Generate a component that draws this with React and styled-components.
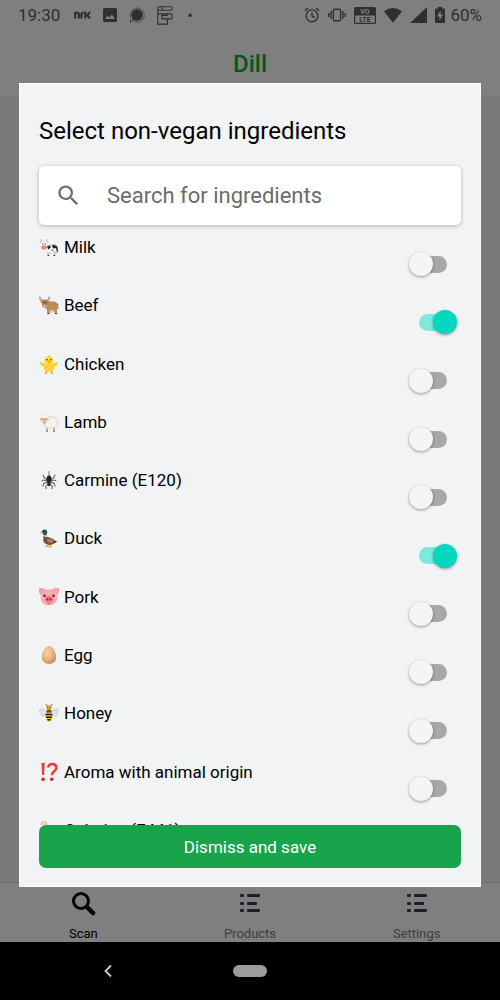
import React, { useState } from "react";
import styled, { createGlobalStyle } from "styled-components";

const GlobalStyle = createGlobalStyle`
  *, *::before, *::after { box-sizing: border-box; }
  body { margin: 0; font-family: Roboto, "Liberation Sans", sans-serif; color: #000; }
`;

const Phone = styled.div`
  display: flex;
  flex-direction: column;
  height: 100vh;
  overflow: hidden;
`;

const Screen = styled.div`
  position: relative;
  flex: 1;
  min-height: 0;
  display: flex;
  flex-direction: column;
  background: #f2f2f2;
`;

const TopArea = styled.div`
  background: #fff;
  border-bottom: 1px solid #e8e8e8;
`;

const StatusBar = styled.div`
  display: flex;
  justify-content: space-between;
  height: 30px;
  padding: 0 18px;
  color: #5e5e5e;
  font-size: 17px;
  line-height: 30px;
`;

const StatusGroup = styled.div`
  display: flex;
  align-items: center;
  gap: ${(p) => p.$gap}px;
  svg { display: block; flex: none; }
`;

const Title = styled.h1`
  margin: 0;
  height: 67px;
  line-height: 68px;
  font-size: 24px;
  font-weight: 500;
  text-align: center;
  color: #06ae40;
`;

const Body = styled.div`
  flex: 1;
`;

const TabBar = styled.nav`
  display: flex;
  height: 60px;
  background: #fff;
  border-top: 1px solid #d8d8d8;
`;

const Tab = styled.a`
  flex: 1;
  display: flex;
  flex-direction: column;
  align-items: center;
  justify-content: space-between;
  padding: 8px 0 0;
  font-size: 13px;
  line-height: 16px;
  text-decoration: none;
  color: ${(p) => (p.$active ? "#000" : "#7c7c7c")};
  svg { display: block; }
`;

const Overlay = styled.div`
  position: absolute;
  inset: 0;
  display: flex;
  padding: 83px 19px 55px;
  background: rgba(0, 0, 0, 0.5);
`;

const Dialog = styled.section`
  flex: 1;
  min-height: 0;
  display: flex;
  flex-direction: column;
  padding: 30px 19px 18px;
  background: #f2f3f5;
  border: 1px solid #fff;
`;

const Heading = styled.h2`
  margin: 0 0 18px;
  font-size: 24px;
  line-height: 34px;
  font-weight: 400;
`;

const SearchBox = styled.label`
  display: flex;
  align-items: center;
  flex: none;
  height: 59px;
  padding: 0 16px;
  gap: 25px;
  background: #fff;
  border-radius: 5px;
  box-shadow: 0 1px 4px rgba(0, 0, 0, 0.28);
  svg { display: block; flex: none; }
`;

const SearchInput = styled.input`
  flex: 1;
  min-width: 0;
  border: 0;
  padding: 0;
  outline: 0;
  background: none;
  font: 400 22px/30px Roboto, "Liberation Sans", sans-serif;
  color: #222;
  &::placeholder { color: #6b6b6b; opacity: 1; }
`;

/* Ten rows fill the visible list; the next one peeks out below them. */
const List = styled.ul`
  flex: 1;
  min-height: 0;
  display: grid;
  grid-auto-rows: 10%;
  margin: 10px 0 0;
  padding: 0 0 7px;
  overflow: hidden;
  list-style: none;
`;

const Row = styled.li`
  display: flex;
  justify-content: space-between;
  align-items: center;
  padding-right: 4px;
`;

const RowLabel = styled.label`
  align-self: flex-start;
  display: flex;
  align-items: center;
  gap: 5px;
  font-size: 17px;
  line-height: 24px;
  svg { display: block; flex: none; }
`;

const Switch = styled.input.attrs({ type: "checkbox", role: "switch" })`
  appearance: none;
  display: grid;
  align-items: center;
  width: 48px;
  height: 24px;
  margin: 0;
  cursor: pointer;
  &::before, &::after { content: ""; grid-area: 1 / 1; }
  &::before {
    justify-self: center;
    width: 28px;
    height: 17px;
    border-radius: 9px;
    background: #a8a8a9;
  }
  &::after {
    justify-self: start;
    width: 24px;
    height: 24px;
    border-radius: 50%;
    background: #f5f5f5;
    box-shadow: 0 1px 3px rgba(0, 0, 0, 0.4);
  }
  &:checked::before { background: #7de8dc; }
  &:checked::after { justify-self: end; background: #03d7bf; }
`;

const SaveButton = styled.button`
  flex: none;
  height: 43px;
  border: 0;
  border-radius: 7px;
  background: #19a34b;
  color: #fff;
  font: 400 17px/24px Roboto, "Liberation Sans", sans-serif;
  cursor: pointer;
`;

const SystemNav = styled.div`
  display: grid;
  grid-template-columns: 1fr 34px 1fr;
  align-items: center;
  height: 58px;
  background: #000;
`;

const BackButton = styled.button`
  justify-self: center;
  display: grid;
  place-items: center;
  width: 24px;
  height: 24px;
  margin-right: 18px;
  padding: 0;
  border: 0;
  background: none;
`;

const HomeButton = styled.button`
  height: 12px;
  padding: 0;
  border: 0;
  border-radius: 6px;
  background: #9c9c9c;
`;

const art = {
  milk: (
    <>
      <path d="M8 8.5 16 7.5q2 .2 2 3l.6 5" fill="#eee" stroke="#999" strokeWidth=".6" />
      <path d="M7 8.5h9l1.5 1-.5 5H8z" fill="#f4f4f4" />
      <path d="M9 15v3.3M11 15v2.6M15 14v4.3M17 14v3.5" stroke="#ccc" strokeWidth="1.6" />
      <path d="M8.5 18.4h1.8M14.4 18.4h1.8" stroke="#333" strokeWidth="1" />
      <path d="M8 9.3l3-.8.8 2-2.6 2zM12.5 8.4l3.6-.4.8 3-2.3.6zM16.4 8.4l1.8 1.2.8 5-.9.5-1-3.6zM12 12.8l2-.4-.3 1.6z" fill="#1c1c1c" />
      <path d="M2.8 4.8 5 3.5l2.4 1.3.3 5-1.3 2.4H3.8L2.3 9.8z" fill="#e9e9e9" />
      <path d="M2.2 5 .9 4.2l.5 2zM8 5l1.4-.8-.5 2z" fill="#c88" />
      <path d="M2 2.3l.7 1.8M8 2.3l-.7 1.8" stroke="#a99" strokeWidth=".9" />
      <ellipse cx="5" cy="10.4" rx="2.8" ry="2" fill="#ed7f85" />
      <path d="M3.5 7.2h.8M5.9 7.2h.8" stroke="#222" strokeWidth="1" />
    </>
  ),
  beef: (
    <>
      <path d="M5 7.2q6.500-2 12-.2 1.900 1.500 1.400 5.200l-.5 3.100.2 3.200h-2.100l-.8-3.700-4.600.1.100 3.600H8.400l-.6-4L5 12z" fill="#bd8d58" />
      <path d="M12 14.600v3M14.600 14.500l.6 3M18.300 8.500q1 2 .6 5.500" fill="none" stroke="#94673b" strokeWidth=".9" />
      <path d="M8.300 18.600h2.300M16 18.600h2.200" stroke="#4d3826" strokeWidth="1" />
      <path d="M3 4.800h5.200l-.4 5.400-1.200 2.500H4.200L3 10.200z" fill="#ac7a46" />
      <path d="M3.400 5.200Q.6 5 1 1.600M7.800 5.200q2.800-.2 2.400-3.600" fill="none" stroke="#9aa0a5" strokeWidth="1.600" />
      <path d="M2.900 6.300.9 6.700l2 1.100M8.100 6.300l2 .4-2 1.100" fill="#7d5534" />
      <ellipse cx="5.500" cy="11.200" rx="2.100" ry="1.600" fill="#e9c3ad" />
      <path d="M4 7.700h.8M6.300 7.700h.8M4.600 11.200h.5M6 11.200h.5" stroke="#332015" strokeWidth=".9" />
    </>
  ),
  chicken: (
    <>
      <path d="M7.800 16.500 7 19M12.200 16.500l.8 2.500M5.800 19h2.400M11.800 19h2.400" stroke="#ef8a17" strokeWidth="1.200" />
      <path d="M5 12.500Q1 11.800 1 7.700L5.800 10M15 12.500q4-.7 4-4.800L14.200 10" fill="#fccb1e" />
      <ellipse cx="10" cy="13" rx="5.600" ry="4.600" fill="#ffd22e" />
      <circle cx="10" cy="6.500" r="4.500" fill="#ffda36" />
      <path d="M9 2.300l1-1.600 1 1.600z" fill="#f5b51a" />
      <circle cx="8" cy="5.800" r=".8" fill="#49351e" />
      <circle cx="12" cy="5.800" r=".8" fill="#49351e" />
      <path d="M8.800 7.200h2.400L10 9.200z" fill="#ed791c" />
    </>
  ),
  lamb: (
    <>
      <path d="M8 15v4M15 15v4" stroke="#c1a08b" strokeWidth="1.5" />
      <path d="M7 19h1.9M14 19h1.9" stroke="#504540" strokeWidth="1" />
      <path d="M6 5.2Q10 3.5 13.5 5q5 .2 5.4 4.3.8 5.5-4.4 6.4-5.5 1.2-8.200-.5Q4 13 4.8 9z" fill="#f3f1ed" stroke="#cfccc6" strokeWidth=".7" />
      <path d="M2.5 5h5.8l-.6 5-1.8 2.2H4.3L2.7 10z" fill="#efc4a2" />
      <path d="M2.7 6 .6 6.8l.6 1.6 2-.5M8 6l2 .8-.6 1.6-2-.5" fill="#dcad8a" />
      <path d="M2 5.3q0-2.4 3.3-3.2 4-.2 4.2 2.6-.8 1.700-2.200 1.100-1.200.8-2 .1-1.700.8-3.300-.6z" fill="#fbfaf6" stroke="#cfcac4" strokeWidth=".6" />
      <path d="M3.8 7.6h.8M6.2 7.6h.8M5 10.6h.9" stroke="#51392e" strokeWidth=".9" />
    </>
  ),
  carmine: (
    <>
      <path d="M10 1v6" stroke="#777" strokeWidth="1" />
      <path d="M8.5 9.8 5.3 8 4 4.700M11.5 9.8 14.700 8 16 4.700M8.2 11.2 4.8 10 2.6 11M11.8 11.2l3.4-1.2 2.2 1M8.2 12.5 5 13l-1.2 3.5M11.8 12.5l3.2.5 1.2 3.5M8.8 14.3 6.7 16l.6 3M11.2 14.3l2.1 1.700-.6 3" fill="none" stroke="#383838" strokeWidth=".9" />
      <ellipse cx="10" cy="9.2" rx="2.5" ry="3.7" fill="#202020" />
      <ellipse cx="10" cy="14" rx="1.9" ry="2.2" fill="#2b2b2b" />
    </>
  ),
  duck: (
    <>
      <path d="M10 15.5 8.5 18M12.5 15.5 11 18.5M6.3 18.2h3M9.5 18.8h3" stroke="#f49c1c" strokeWidth="1.3" />
      <path d="M4.2 7.5q1.3 1.6 4 1.2 5.5 1 9 4.6l-2 2.3q-4.500 2.500-8.700.2Q3.200 13.500 4.500 10z" fill="#76513b" />
      <path d="M8 10.5q5 .1 8.6 3.2-5.700 2.200-8.200-.2z" fill="#aa8060" />
      <path d="M14 13l4.5.3-3 2z" fill="#3e3430" />
      <path d="M2.5 4Q3 1.1 6 1.5q3 .8 2 4L7 8.3l-2.900-.7L4 5z" fill="#255c51" />
      <path d="M4 7.4l3.3.8" stroke="#eee" strokeWidth=".9" />
      <path d="M3 3.7.5 5.3l3 .5z" fill="#e6ac2a" />
      <circle cx="4.7" cy="3.7" r=".5" fill="#111" />
    </>
  ),
  pork: (
    <>
      <path d="M.6 1.800q3-.8 6 .7L2.400 7.500Q0 7.200.6 1.800zM19.400 1.800q-3-.8-6 .7l4.200 5q2.400-.3 1.800-5.700z" fill="#f9a1a9" stroke="#de8089" strokeWidth=".6" />
      <path d="M5 2.500h10q3.300 1.100 3.400 8-.3 7.500-8.400 7.700-8.100-.2-8.400-7.700.1-6.900 3.400-8z" fill="#ffa8af" />
      <ellipse cx="10" cy="12.200" rx="4.100" ry="3.100" fill="#ef7681" />
      <circle cx="5.500" cy="8.800" r="1.200" fill="#333" />
      <circle cx="14.500" cy="8.800" r="1.200" fill="#333" />
      <ellipse cx="8.500" cy="12.200" rx=".8" ry="1.300" fill="#812f39" />
      <ellipse cx="11.500" cy="12.200" rx=".8" ry="1.300" fill="#812f39" />
      <path d="M8.200 16.200q1.800 1 3.600 0" fill="none" stroke="#b84a58" strokeWidth=".8" />
    </>
  ),
  egg: (
    <>
      <defs>
        <radialGradient id="eggShade" cx=".38" cy=".36" r=".7">
          <stop offset="0" stopColor="#f8d5a8" />
          <stop offset=".6" stopColor="#e4b075" />
          <stop offset="1" stopColor="#c18b55" />
        </radialGradient>
      </defs>
      <path d="M10 1C6.5 1 2.9 7.5 2.9 12.2c0 4 3 6.700 7.100 6.700s7.100-2.700 7.100-6.700C17.100 7.500 13.500 1 10 1z" fill="url(#eggShade)" />
    </>
  ),
  honey: (
    <>
      <path d="M8 8.500Q3.500 4.600.9 6.200q-1.300 2.800 1.400 4.500-.8 2.300 1.500 3Q7 13 8.500 10M12 8.500q4.500-3.900 7.100-2.300 1.300 2.800-1.400 4.500.8 2.300-1.500 3Q13 13 11.500 10" fill="#dfe2e4" stroke="#b9bfc4" strokeWidth=".6" />
      <path d="M8.6 3.2 7 1.2M11.4 3.2 13 1.2" stroke="#4a3c24" strokeWidth=".9" />
      <circle cx="10" cy="4.7" r="2.7" fill="#e6b32f" />
      <ellipse cx="10" cy="8.6" rx="2.6" ry="2" fill="#6d5427" />
      <path d="M6.400 12q.3-2.600 3.600-2.600t3.600 2.600q-.2 4.700-3.600 7.300Q6.600 16.700 6.400 12z" fill="#fbc72b" />
      <path d="M6.5 11.5h7M7 14.2h6M8.3 16.8h3.4" stroke="#251f18" strokeWidth="1.4" />
      <circle cx="8.7" cy="4.5" r=".6" fill="#222" />
      <circle cx="11.3" cy="4.5" r=".6" fill="#222" />
    </>
  ),
  aroma: (
    <>
      <path d="M2.400 1h3.400l-.7 12H3.100z" fill="#f03a3e" />
      <circle cx="4.1" cy="17.2" r="1.8" fill="#dc2329" />
      <path d="M9.200 5.500Q9.500 2 13 2q4.400.1 4.400 3.800 0 2-2.300 3.600-2.200 1.300-2.200 3.800" fill="none" stroke="#f03a3e" strokeWidth="2.6" />
      <circle cx="12.8" cy="17.2" r="1.8" fill="#dc2329" />
    </>
  ),
  gelatine: (
    <path d="M2.500 6Q1 1.800 4.500 2q2-2 3.200 1Q8.600 5 7 6l8 7q3-.4 3 2.200-.5 2.600-3 2.200-2.200.5-2.200-2L5 7.600z" fill="#ecd9b8" stroke="#cdb07d" strokeWidth=".8" />
  ),
};

const ingredients = [
  ["milk", "Milk"],
  ["beef", "Beef"],
  ["chicken", "Chicken"],
  ["lamb", "Lamb"],
  ["carmine", "Carmine (E120)"],
  ["duck", "Duck"],
  ["pork", "Pork"],
  ["egg", "Egg"],
  ["honey", "Honey"],
  ["aroma", "Aroma with animal origin"],
  ["gelatine", "Gelatine (E441)"],
];

const Emoji = ({ name }) => (
  <svg width="20" height="20" viewBox="0 0 20 20" aria-hidden="true">{art[name]}</svg>
);

const ListIcon = () => (
  <svg width="22" height="26" viewBox="0 0 22 26" fill="#343f50" aria-hidden="true">
    {[[3, 13], [11, 10], [18, 13]].map(([y, w]) => (
      <g key={y}>
        <rect x="1" y={y} width="4" height="3" rx="1" />
        <rect x="8" y={y} width={w} height="3" rx="1" />
      </g>
    ))}
  </svg>
);

const StatusIconsLeft = () => (
  <StatusGroup $gap={12}>
    <svg width="17" height="8" viewBox="0 0 17 8" fill="none" stroke="currentColor" strokeWidth="2.1" aria-hidden="true">
      <path d="M1.200 7.500V1M1 1.800h2.400q1.500 0 1.500 1.600v4.100M7.400 7.500V3.200q0-1.500 2.300-1.500M11.300.5v7M12 4.300h1.300L16 .8M13.300 4.300 16 7.400" />
    </svg>
    <svg width="14" height="14" viewBox="0 0 14 14" aria-hidden="true">
      <path fill="currentColor" fillRule="evenodd" d="M1.500 0h11Q14 0 14 1.500v11q0 1.500-1.500 1.500h-11Q0 14 0 12.500v-11Q0 0 1.500 0zM2 11h10L8.900 6.500 6.300 9.700 4.600 7.600z" />
    </svg>
    <svg width="16" height="16" viewBox="0 0 16 16" aria-hidden="true">
      <path fill="currentColor" d="M8 2.200a5.800 5.800 0 1 1-2.500 11L2.800 14l.7-2.500A5.800 5.800 0 0 1 8 2.200z" />
      <path d="M1.800 11.200A7.100 7.100 0 1 1 5 14.500M1.600 12.500 1 15l2.600-.6" fill="none" stroke="currentColor" strokeDasharray="1.7 .9" />
    </svg>
    <svg width="16" height="19" viewBox="0 0 16 19" fill="none" stroke="currentColor" strokeWidth="1.1" aria-hidden="true">
      <path d="M5.200 4.300V.7h8.500q1.500 0 1.500 1.800t-1.500 1.800H3.200M5.200.7h-3Q.8.700.8 2.200v15.900h9.600v-5.200M4.800 7.900h8.900q1.500 0 1.500 1.700v1.600q0 1.700-1.500 1.700H5V9.400h5.200V7.900M.8 8V6q0-1.700 2.400-1.700M.8 9.400q0-1.500 2-1.500h2" />
    </svg>
  </StatusGroup>
);

const StatusIconsRight = () => (
  <StatusGroup $gap={8}>
    <svg width="16" height="16" viewBox="0 0 16 16" fill="none" stroke="currentColor" strokeWidth="1.4" aria-hidden="true">
      <circle cx="8" cy="8.8" r="5.9" />
      <path d="M8 5.300V9l2.600 1.700M1 3.700 4 1.100M15 3.700l-3-2.600" />
    </svg>
    <svg width="18" height="14" viewBox="0 0 18 14" fill="none" stroke="currentColor" strokeWidth="1.4" aria-hidden="true">
      <rect x="5.4" y="1.2" width="7.2" height="11.6" rx="1" />
      <path d="M3.100 3v8M.8 5v4M14.900 3v8M17.200 5v4" />
    </svg>
    <svg width="22" height="17" viewBox="0 0 22 17" aria-hidden="true">
      <rect x=".6" y=".6" width="20.8" height="15.8" rx="1" fill="none" stroke="currentColor" strokeWidth="1.2" />
      <path d="M1 1h20v7.500H1z" fill="currentColor" />
      <text x="11" y="7.4" textAnchor="middle" fontFamily="Roboto, sans-serif" fontSize="7" fontWeight="700" fill="#fff">VO</text>
      <text x="11" y="15.2" textAnchor="middle" fontFamily="Roboto, sans-serif" fontSize="7" fontWeight="700" fill="currentColor">LTE</text>
    </svg>
    <svg width="18" height="15" viewBox="0 0 18 15" fill="currentColor" aria-hidden="true">
      <path d="M0 3.300Q9-3.200 18 3.300L9 14.800z" />
    </svg>
    <svg width="17" height="16" viewBox="0 0 17 16" fill="currentColor" aria-hidden="true">
      <path d="M17 0v16H0z" />
    </svg>
    <svg width="10" height="16" viewBox="0 0 10 16" aria-hidden="true">
      <path fill="currentColor" d="M3 0h4v1.400h2q1 0 1 1V15q0 1-1 1H1q-1 0-1-1V2.400q0-1 1-1h2z" />
      <path d="M5.600 3.500 2 9.500h2.400v4L8 7.500H5.600z" fill="#fff" />
    </svg>
  </StatusGroup>
);

export default function App() {
  const [selected, setSelected] = useState({ beef: true, duck: true });
  const toggle = (id) => setSelected((s) => ({ ...s, [id]: !s[id] }));

  return (
    <Phone>
      <GlobalStyle />
      <Screen>
        <TopArea>
          <StatusBar>
            <StatusGroup $gap={14}>
              <span>19:30</span>
              <StatusIconsLeft />
              <span>•</span>
            </StatusGroup>
            <StatusGroup $gap={5}>
              <StatusIconsRight />
              <span>60%</span>
            </StatusGroup>
          </StatusBar>
          <Title>Dill</Title>
        </TopArea>
        <Body />
        <TabBar>
          <Tab href="#scan" $active>
            <svg width="26" height="26" viewBox="0 0 26 26" fill="none" stroke="#000" aria-hidden="true">
              <circle cx="11" cy="10" r="7.500" strokeWidth="3" />
              <path d="m17 16 6 6" strokeWidth="4.500" strokeLinecap="round" />
            </svg>
            Scan
          </Tab>
          <Tab href="#products"><ListIcon />Products</Tab>
          <Tab href="#settings"><ListIcon />Settings</Tab>
        </TabBar>
        <Overlay>
          <Dialog role="dialog" aria-labelledby="dialog-title">
            <Heading id="dialog-title">Select non-vegan ingredients</Heading>
            <SearchBox>
              <svg width="27" height="27" viewBox="0 0 24 24" fill="#6b6b6b" aria-hidden="true">
                <path d="M15.500 14h-.79l-.28-.27A6.470 6.470 0 0 0 16 9.500 6.500 6.500 0 1 0 9.500 16c1.610 0 3.090-.59 4.230-1.570l.27.28v.79l5 4.990L20.490 19l-4.990-5zm-6 0C7.010 14 5 11.990 5 9.500S7.010 5 9.500 5 14 7.010 14 9.500 11.990 14 9.500 14z" />
              </svg>
              <SearchInput type="text" placeholder="Search for ingredients" aria-label="Search for ingredients" />
            </SearchBox>
            <List>
              {ingredients.map(([id, name]) => (
                <Row key={id}>
                  <RowLabel htmlFor={id}><Emoji name={id} />{name}</RowLabel>
                  <Switch id={id} checked={!!selected[id]} onChange={() => toggle(id)} />
                </Row>
              ))}
            </List>
            <SaveButton type="button">Dismiss and save</SaveButton>
          </Dialog>
        </Overlay>
      </Screen>
      <SystemNav>
        <BackButton type="button" aria-label="Back">
          <svg width="8" height="14" viewBox="0 0 8 14" fill="none" stroke="#ccc" strokeWidth="1.800" aria-hidden="true">
            <path d="M7 1.500 1.500 7 7 12.500" />
          </svg>
        </BackButton>
        <HomeButton type="button" aria-label="Home" />
      </SystemNav>
    </Phone>
  );
}
